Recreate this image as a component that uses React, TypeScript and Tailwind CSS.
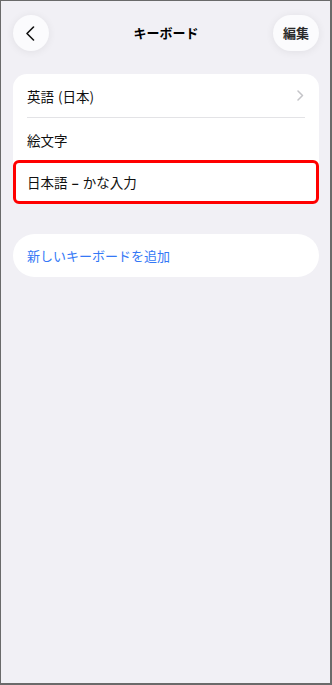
const font = { fontFamily: '"Noto Sans CJK JP", "Noto Sans", sans-serif' }

function ChevronLeft() {
  return (
    <svg width="10" height="15" viewBox="0 0 10 15" fill="none">
      <path d="M8.5 1 L2 7.5 L8.5 14" stroke="#111" strokeWidth="1.6" strokeLinecap="round" strokeLinejoin="round" />
    </svg>
  )
}

function ChevronRight() {
  return (
    <svg width="7" height="11" viewBox="0 0 7 11" fill="none">
      <path d="M1 1 L5.5 5.5 L1 10" stroke="#c4c4c8" strokeWidth="1.5" strokeLinecap="round" strokeLinejoin="round" />
    </svg>
  )
}

export default function App() {
  return (
    <div
      className="w-[332px] h-[685px] bg-[#f1f0f5] border-t border-l border-r-2 border-b-2 border-[#6a6a6a] overflow-hidden"
      style={font}
    >
      <div className="w-[306px] ml-[12px]">
        {/* Nav bar */}
        <div className="mt-[14px] grid grid-cols-[1fr_auto_1fr] items-center h-[36px]">
          <div>
            <button className="w-[36px] h-[36px] rounded-full bg-[#fbfbfd] shadow-[0_1px_8px_rgba(0,0,0,0.07)] flex items-center justify-center pr-[3px]">
              <ChevronLeft />
            </button>
          </div>
          <h1 className="text-[13px] font-bold text-black">キーボード</h1>
          <div className="flex justify-end">
            <button className="h-[36px] w-[46px] rounded-full bg-[#fbfbfd] shadow-[0_1px_8px_rgba(0,0,0,0.07)] text-[13px] font-bold text-[#2a2a2a]">
              編集
            </button>
          </div>
        </div>

        {/* Keyboards list */}
        <div className="mt-[23px] bg-white rounded-[14px]">
          <div className="h-[43px] pl-[14px] pr-[15px] flex items-center justify-between">
            <span className="text-[13.5px] text-[#111] pt-[2px]">英語<span className="ml-[4px]">(日本)</span></span>
            <ChevronRight />
          </div>
          <div className="ml-[14px] mr-[14px] h-px bg-[#e3e3e6]" />
          <div className="h-[42px] pl-[14px] flex items-center">
            <span className="text-[13.5px] text-[#111] pt-[2px]">絵文字</span>
          </div>
          <div className="h-[44px] pl-[11px] flex items-center bg-white border-[3px] border-[#ff0000] rounded-[6px]">
            <span className="text-[13.5px] text-[#111]">日本語<span className="mx-[4px] font-bold">–</span>かな入力</span>
          </div>
        </div>

        {/* Add keyboard */}
        <div className="mt-[30px] h-[43px] bg-white rounded-full pl-[14px] flex items-center">
          <span className="text-[13px] text-[#3478f6]">新しいキーボードを追加</span>
        </div>
      </div>
    </div>
  )
}
